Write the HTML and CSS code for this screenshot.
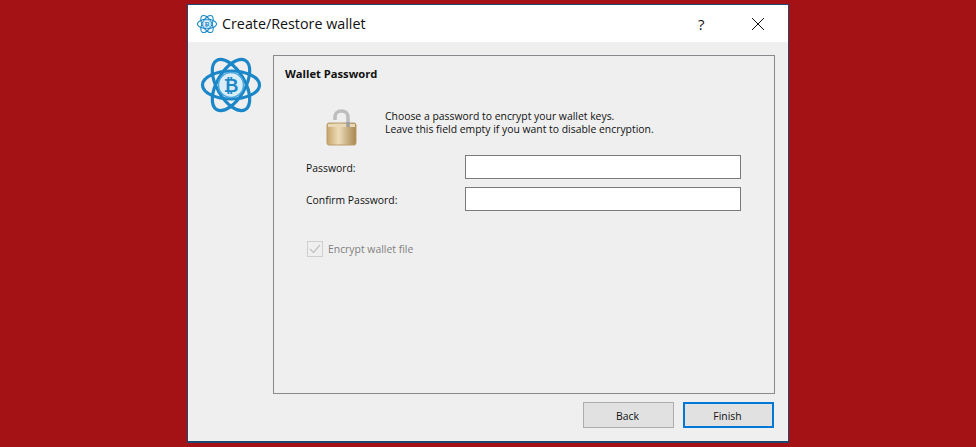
FILE: index.html
```html
<!DOCTYPE html>
<html lang="en">
<head>
    <meta charset="UTF-8">
    <meta name="viewport" content="width=device-width, initial-scale=1.0">
    <title>Create/Restore wallet</title>
    <link rel="stylesheet" href="styles.css">
</head>
<body>
    <div class="window">
        <div class="titlebar">
            <svg class="title-logo" viewBox="0 0 60 60">
                <use href="#electrum"></use>
            </svg>
            <span class="title-text">Create/Restore wallet</span>
            <span class="help-btn">?</span>
            <svg class="close-btn" viewBox="0 0 12 12">
                <path d="M0 0L12 12M12 0L0 12" stroke="#111" stroke-width="1" fill="none"/>
            </svg>
        </div>
        <div class="content">
            <div class="logo-col">
                <svg class="big-logo" viewBox="0 0 60 60">
                    <defs>
                        <g id="electrum">
                            <g fill="none" stroke="#1b87c9" stroke-width="3.2">
                                <ellipse cx="30" cy="30" rx="28.500" ry="14"/>
                                <ellipse cx="30" cy="30" rx="28.500" ry="14" transform="rotate(60 30 30)"/>
                                <ellipse cx="30" cy="30" rx="28.500" ry="14" transform="rotate(120 30 30)"/>
                            </g>
                            <circle cx="30" cy="30" r="12.500" fill="#d9edf8" stroke="#4aa8de" stroke-width="1.500"/>
                            <text class="logo-b" x="30" y="36.500" text-anchor="middle">₿</text>
                        </g>
                        <linearGradient id="lock-body" x1="0" x2="1" y1="0" y2="0">
                            <stop offset="0" stop-color="#c6a469"/>
                            <stop offset="0.4" stop-color="#eedcb8"/>
                            <stop offset="1" stop-color="#a88650"/>
                        </linearGradient>
                    </defs>
                    <use href="#electrum"></use>
                </svg>
            </div>
            <div class="main-col">
                <div class="panel">
                    <h1 class="panel-title">Wallet Password</h1>
                    <div class="intro">
                        <svg class="lock-icon" viewBox="0 0 32 38">
                            <path d="M9 11V8c0-3.500 2.500-6 6.500-6s6.500 2.500 6.500 6v13" fill="none" stroke="#bdbdbd" stroke-width="3.600"/>
                            <rect x="1" y="14" width="29" height="22" rx="2" fill="url(#lock-body)" stroke="#b99c68"/>
                            <rect x="2" y="15" width="27" height="3" fill="#e9d9b6"/>
                            <path d="M22 13V18" stroke="#a0a0a0" stroke-width="3.600"/>
                        </svg>
                        <p class="intro-text">Choose a password to encrypt your wallet keys.<br>Leave this field empty if you want to disable encryption.</p>
                    </div>
                    <div class="form-row">
                        <label class="field-label">Password:</label>
                        <input class="field-input" type="password">
                    </div>
                    <div class="form-row">
                        <label class="field-label">Confirm Password:</label>
                        <input class="field-input" type="password">
                    </div>
                    <div class="check-row">
                        <span class="check-box">
                            <svg viewBox="0 0 16 16" width="16" height="16">
                                <path d="M3 8l3.500 3.500L13 4" fill="none" stroke="#c4c4c4" stroke-width="1.300"/>
                            </svg>
                        </span>
                        <span class="check-label">Encrypt wallet file</span>
                    </div>
                </div>
                <div class="button-row">
                    <button class="btn">Back</button>
                    <button class="btn btn-default">Finish</button>
                </div>
            </div>
        </div>
    </div>
</body>
</html>
```
FILE: styles.css
```css
html, body {
    margin: 0;
    height: 447px;
    overflow: hidden;
}
body {
    background-color: #a51216;
    font-family: "Open Sans", sans-serif;
    font-size: 10.4px;
    color: #111;
    padding: 4px 0 0 187px;
    box-sizing: border-box;
}
.window {
    width: 602px;
    height: 439px;
    box-sizing: border-box;
    border: 1px solid #1c4a6e;
    border-bottom-width: 2px;
    background-color: #efefef;
    display: flex;
    flex-direction: column;
}
.titlebar {
    height: 37px;
    flex: none;
    background-color: white;
    display: flex;
    align-items: center;
    padding-left: 9px;
}
.title-logo {
    width: 20px;
    height: 20px;
    margin-right: 5px;
}
.logo-b {
    font-family: "DejaVu Sans", sans-serif;
    font-weight: 700;
    font-size: 18px;
    fill: #1b87c9;
}
.title-text {
    font-size: 14.3px;
    flex: 1;
}
.help-btn {
    font-size: 15px;
    width: 10px;
    margin-right: 44px;
}
.close-btn {
    width: 12px;
    height: 12px;
    margin-right: 24px;
}
.content {
    flex: 1;
    display: flex;
    padding: 13px 13px 0 12px;
}
.logo-col {
    width: 73px;
    flex: none;
}
.big-logo {
    width: 62px;
    height: 60px;
}
.main-col {
    flex: 1;
    display: flex;
    flex-direction: column;
}
.panel {
    height: 339px;
    box-sizing: border-box;
    border: 1px solid #888a90;
    padding: 11px 33px 0 11px;
}
.panel-title {
    font-size: 11.2px;
    font-weight: 700;
    margin: 0;
    line-height: 14px;
}
.intro {
    display: flex;
    margin-top: 21px;
    height: 45px;
    padding-left: 41px;
}
.lock-icon {
    width: 32px;
    height: 38px;
    margin-right: 27px;
    margin-top: 7px;
}
.intro-text {
    margin: 8px 0 0;
    line-height: 13px;
}
.form-row {
    display: flex;
    align-items: center;
    margin-top: 8px;
    padding-left: 21px;
}
.field-label {
    width: 159px;
    padding-top: 2px;
}
.field-input {
    width: 276px;
    height: 24px;
    box-sizing: border-box;
    border: 1px solid #7a7a7a;
    background-color: white;
    padding: 0;
}
.check-row {
    display: flex;
    align-items: center;
    margin-top: 30px;
    padding-left: 22px;
}
.check-box {
    width: 16px;
    height: 16px;
    box-sizing: border-box;
    border: 1px solid #cfcfcf;
    display: flex;
    align-items: center;
    justify-content: center;
    margin-right: 5px;
}
.check-box svg {
    flex: none;
}
.check-label {
    color: #7f7f7f;
}
.button-row {
    display: flex;
    justify-content: flex-end;
    gap: 9px;
    margin-top: 8px;
    padding-right: 1px;
}
.btn {
    width: 91px;
    height: 26px;
    box-sizing: border-box;
    border: 1px solid #adadad;
    background-color: #e1e1e1;
    font-family: inherit;
    font-size: 10.4px;
    color: #111;
    padding: 2px 2px 0 0;
}
.btn-default {
    border: 2px solid #0078d7;
}
```
